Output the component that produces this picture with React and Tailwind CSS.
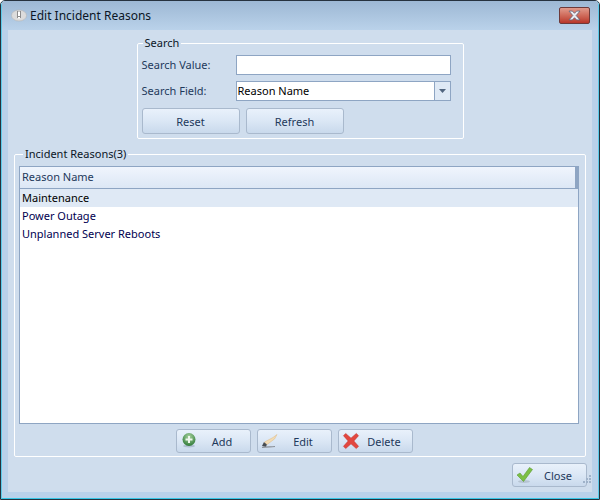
const font = { fontFamily: '"Noto Sans", "DejaVu Sans", sans-serif' };

function Btn({ children, className = "" }) {
  return (
    <button className={"flex items-center justify-center rounded-[3px] border border-[#a9b9cd] bg-linear-to-b from-[#e9f1fb] via-[#dbe7f5] to-[#c9d9ec] text-[11px] leading-none text-[#1e395b] " + className}>
      {children}
    </button>
  );
}

function IconBtn({ label, icon }) {
  return (
    <button className="flex h-[24px] w-[75px] items-center rounded-[3px] border border-[#a9b9cd] bg-linear-to-b from-[#e9f1fb] via-[#dbe7f5] to-[#c9d9ec] pl-[3px] text-[11px] leading-none text-[#1e395b]">
      <span className="flex h-[18px] w-[18px] shrink-0 items-center justify-center">{icon}</span>
      <span className="flex-1 pr-[4px] text-center">{label}</span>
    </button>
  );
}

const AddIcon = (
  <svg width="16" height="16" viewBox="0 0 16 16" className="-mt-[3px] -ml-[1px]">
    <defs>
      <radialGradient id="g1" cx="50%" cy="30%" r="70%">
        <stop offset="0" stopColor="#a9d4a0" />
        <stop offset="1" stopColor="#2f7a38" />
      </radialGradient>
    </defs>
    <ellipse cx="8" cy="14" rx="6" ry="1.500" fill="#9fb0c4" opacity=".7" />
    <circle cx="8" cy="7.500" r="6.500" fill="url(#g1)" />
    <path d="M7 4h2v2.500h2.500v2H9V11H7V8.500H4.500v-2H7z" fill="#eef6ec" />
  </svg>
);
const EditIcon = (
  <svg width="18" height="16" viewBox="0 0 18 16">
    <path d="M1 13l2-4 3 2-1 3z" fill="#474c52" />
    <path d="M3.500 9L12 4.500 16 1.500l-2.500 4.500L6 11.500z" fill="#f3dcb4" stroke="#dcb983" strokeWidth=".5" />
    <path d="M1 14.500c4-1 8-.5 13-1" stroke="#8a8f96" strokeWidth="1.200" fill="none" />
  </svg>
);
const DelIcon = (
  <svg width="18" height="18" viewBox="0 0 18 18">
    <path d="M1.500 3.700L3.700 1.500 9 6.200 14.300 1.500 16.500 3.700 11.800 9 16.500 14.300 14.300 16.500 9 11.800 3.700 16.500 1.500 14.300 6.200 9z" fill="#e2473f" stroke="#c9302a" strokeWidth=".6" strokeLinejoin="round" />
  </svg>
);
const CheckIcon = (
  <svg width="20" height="20" viewBox="0 0 18 18">
    <ellipse cx="8" cy="15.500" rx="6" ry="1.500" fill="#a9b6c4" opacity=".7" />
    <path d="M1 9l3-2 3 3.500L13.500 1.500l3 2L7.500 15.500z" fill="#7cbf45" stroke="#5d9c34" strokeWidth=".6" strokeLinejoin="round" />
  </svg>
);

export default function App() {
  return (
    <div style={font} className="h-[500px] w-[600px] overflow-hidden rounded-t-[5px] border border-[#26323e] bg-white text-[11px]">
      <div className="flex h-full flex-col rounded-t-[4px] border-x border-b border-x-[#5ccbea] border-b-[#36c6e6] bg-[#b9d1ea]">
        <div className="flex h-[29px] shrink-0 items-center bg-linear-to-b from-[#9db8d4] to-[#bad2ea] pl-[9px] pr-[8px]">
          <svg width="16" height="13" viewBox="0 0 16 13" className="mr-[3px]">
            <ellipse cx="8" cy="6.500" rx="7.500" ry="5.500" fill="#dcdcdc" stroke="#b5b5b5" strokeWidth=".6" />
            <rect x="6" y="2" width="4" height="7" fill="#8d8d8d" />
            <rect x="7" y="2.500" width="2" height="4.500" fill="#fff" />
            <rect x="7" y="8" width="2" height="1.500" fill="#fff" />
          </svg>
          <span className="text-[12px] text-[#0b1626]">Edit Incident Reasons</span>
          <div className="ml-auto flex h-[17px] w-[31px] items-center justify-center rounded-[2px] border border-[#6e3a3a] bg-linear-to-b from-[#e09a8c] via-[#cf6a5a] to-[#b8352a]">
            <svg width="15" height="11" viewBox="0 0 13 10">
              <path d="M1.500 1h3L6.500 3 8.500 1h3L8 5l3.500 4h-3L6.500 7 4.500 9h-3L5 5z" fill="#eceef3" stroke="#5a5f78" strokeWidth=".7" />
            </svg>
          </div>
        </div>

        <div className="mx-[6px] mb-[6px] flex flex-1 flex-col bg-[#cfdded] px-[6px] pt-[6px]">
          <fieldset className="mx-auto h-[103px] w-[327px] shrink-0 rounded-[2px] border border-white pl-[4px] pr-[12px]">
            <legend className="ml-[1px] px-[2px] text-[11px] leading-[14px] text-[#0b1626]">Search</legend>
            <div className="mt-[5px] flex h-[20px] items-center">
              <label className="w-[94px] text-[#1e395b]">Search Value:</label>
              <div className="h-[20px] flex-1 border border-[#8ea5c3] bg-white" />
            </div>
            <div className="mt-[6px] flex h-[20px] items-center">
              <label className="w-[94px] text-[#1e395b]">Search Field:</label>
              <div className="flex h-[20px] flex-1 items-center border border-[#8ea5c3] bg-white">
                <span className="flex-1 pl-[1px] text-black">Reason Name</span>
                <span className="flex h-full w-[16px] items-center justify-center border-l border-[#8ea5c3] bg-[#dfe9f5]">
                  <svg width="7" height="4" viewBox="0 0 7 4"><path d="M0 0h7L3.500 4z" fill="#51657f" /></svg>
                </span>
              </div>
            </div>
            <div className="mt-[7px] flex gap-[6px]">
              <Btn className="h-[26px] w-[98px]">Reset</Btn>
              <Btn className="h-[26px] w-[98px]">Refresh</Btn>
            </div>
          </fieldset>

          <fieldset className="mt-[8px] h-[310px] shrink-0 rounded-[2px] border border-white pl-[4px] pr-[6px]">
            <legend className="ml-[4px] px-[2px] text-[11px] leading-[14px] text-[#0b1626]">Incident Reasons(3)</legend>
            <div className="mt-[5px] flex h-[258px] flex-col border border-[#8ea5c3] bg-white">
              <div className="flex h-[22px] shrink-0 items-center border-b border-r-[3px] border-[#8ea5c3] bg-linear-to-b from-[#f0f5fd] to-[#dce7f5] pl-[2px] text-[#1e395b]">Reason Name</div>
              <div className="flex h-[18px] items-center bg-[#dfe9f5] pl-[2px] text-black">Maintenance</div>
              <div className="flex h-[18px] items-center pl-[2px] text-[#000050]">Power Outage</div>
              <div className="flex h-[18px] items-center pl-[2px] text-[#000050]">Unplanned Server Reboots</div>
            </div>
            <div className="mt-[5px] flex justify-center gap-[6px] pr-[9px]">
              <IconBtn label="Add" icon={AddIcon} />
              <IconBtn label="Edit" icon={EditIcon} />
              <IconBtn label="Delete" icon={DelIcon} />
            </div>
          </fieldset>

          <div className="relative mt-[6px] flex justify-end pr-[-1px]">
            <div className="-mr-[1px]">
              <IconBtn label="Close" icon={CheckIcon} />
            </div>
            <svg width="12" height="12" viewBox="0 0 12 12" className="absolute -right-[6px] bottom-[1px]">
              <g fill="#9fb2c9">
                <rect x="9" y="1" width="2" height="2" />
                <rect x="6" y="4" width="2" height="2" />
                <rect x="9" y="4" width="2" height="2" />
                <rect x="3" y="7" width="2" height="2" />
                <rect x="6" y="7" width="2" height="2" />
                <rect x="9" y="7" width="2" height="2" />
              </g>
            </svg>
          </div>
        </div>
      </div>
    </div>
  );
}
